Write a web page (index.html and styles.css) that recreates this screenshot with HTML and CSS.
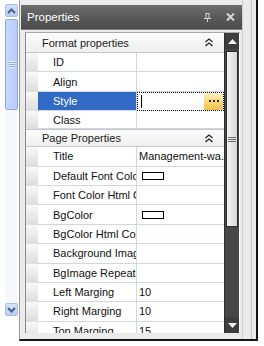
FILE: index.html
```html
<!DOCTYPE html>
<html lang="en">
<head>
    <meta charset="UTF-8">
    <title>Properties</title>
    <link rel="stylesheet" href="styles.css">
</head>
<body>
<div class="screen">

    <div class="side-scroll">
        <div class="xp-btn">
            <svg width="9" height="6" viewBox="0 0 9 6"><path d="M1 5 L4.5 1.5 L8 5" fill="none" stroke="#4d6185" stroke-width="2"/></svg>
        </div>
        <div class="xp-thumb"><span class="xp-grip"></span></div>
        <div class="xp-track"></div>
        <div class="xp-btn">
            <svg width="9" height="6" viewBox="0 0 9 6"><path d="M1 1 L4.5 4.5 L8 1" fill="none" stroke="#4d6185" stroke-width="2"/></svg>
        </div>
    </div>

    <div class="window">
        <div class="titlebar">
            <span class="title">Properties</span>
            <svg class="pin" width="7" height="9" viewBox="0 0 7 9"><path d="M1.5 0.5 H5.5 M2 0.5 V5 M5 0.5 V5 M0 5.5 H7 M3.5 5.5 V9" fill="none" stroke="#d6d6d6" stroke-width="1"/></svg>
            <svg class="close" width="9" height="8" viewBox="0 0 9 8"><path d="M1 0.5 L8 7.5 M8 0.5 L1 7.5" fill="none" stroke="#d6d6d6" stroke-width="2"/></svg>
        </div>

        <div class="content">
            <div class="panel">
                <div class="grid">
                    <div class="section">
                        <span>Format properties</span>
                        <svg class="fold" width="8" height="9" viewBox="0 0 8 9"><path d="M0.5 4 L4 1 L7.5 4 M0.5 8 L4 5 L7.5 8" fill="none" stroke="#222" stroke-width="1.3"/></svg>
                    </div>
                    <div class="row"><span class="gut"></span><span class="name">ID</span><span class="val"></span></div>
                    <div class="row"><span class="gut"></span><span class="name">Align</span><span class="val"></span></div>
                    <div class="row selected">
                        <span class="gut"></span><span class="name">Style</span>
                        <span class="val edit">
                            <span class="caret"></span>
                            <span class="dots"><svg width="10" height="2" viewBox="0 0 10 2"><path d="M0 0h2v2H0z M4 0h2v2H4z M8 0h2v2H8z" fill="#2a2a2a"/></svg></span>
                        </span>
                    </div>
                    <div class="row short"><span class="gut"></span><span class="name">Class</span><span class="val"></span></div>

                    <div class="section tight">
                        <span>Page Properties</span>
                        <svg class="fold" width="8" height="9" viewBox="0 0 8 9"><path d="M0.5 4 L4 1 L7.5 4 M0.5 8 L4 5 L7.5 8" fill="none" stroke="#222" stroke-width="1.3"/></svg>
                    </div>
                    <div class="row"><span class="gut"></span><span class="name">Title</span><span class="val">Management-wa.</span></div>
                    <div class="row"><span class="gut"></span><span class="name">Default Font Color</span><span class="val"><span class="swatch"></span></span></div>
                    <div class="row"><span class="gut"></span><span class="name">Font Color Html Code</span><span class="val"></span></div>
                    <div class="row"><span class="gut"></span><span class="name">BgColor</span><span class="val"><span class="swatch"></span></span></div>
                    <div class="row"><span class="gut"></span><span class="name">BgColor Html Code</span><span class="val"></span></div>
                    <div class="row"><span class="gut"></span><span class="name">Background Image</span><span class="val"></span></div>
                    <div class="row"><span class="gut"></span><span class="name">BgImage Repeat</span><span class="val"></span></div>
                    <div class="row"><span class="gut"></span><span class="name">Left Marging</span><span class="val">10</span></div>
                    <div class="row"><span class="gut"></span><span class="name">Right Marging</span><span class="val">10</span></div>
                    <div class="row"><span class="gut"></span><span class="name">Top Marging</span><span class="val">15</span></div>
                </div>

                <div class="vscroll">
                    <div class="vs-btn"><svg width="9" height="5" viewBox="0 0 9 5"><path d="M0 5 L4.5 0 L9 5 Z" fill="#f2f2f2"/></svg></div>
                    <div class="vs-thumb"><span class="vs-grip"></span></div>
                    <div class="vs-track"></div>
                    <div class="vs-btn"><svg width="9" height="5" viewBox="0 0 9 5"><path d="M0 0 L4.5 5 L9 0 Z" fill="#f2f2f2"/></svg></div>
                </div>
            </div>
        </div>
    </div>

</div>
</body>
</html>
```

FILE: styles.css
```css
*{
    margin: 0;
    padding: 0;
    box-sizing: border-box;
}
body{
    width: 264px;
    height: 346px;
    overflow: hidden;
    background: #fff;
    font-family: "Liberation Sans", Arial, sans-serif;
    font-size: 11px;
    color: #111;
}
.screen{
    display: flex;
    height: 346px;
}

/* left XP scrollbar */
.side-scroll{
    width: 19px;
    height: 316px;
    padding: 4px 1px 0 5px;
    display: flex;
    flex-direction: column;
}
.xp-btn{
    height: 13px;
    display: flex;
    align-items: center;
    justify-content: center;
    background: linear-gradient(#d6e3fd, #b7cbf7);
    border: 1px solid #a9bde6;
    border-radius: 2px;
}
.xp-thumb{
    height: 91px;
    margin-top: 2px;
    display: flex;
    align-items: center;
    justify-content: center;
    background: linear-gradient(90deg, #c6d7fc, #b8cdf9);
    border: 1px solid #8fa9df;
    border-radius: 2px;
}
.xp-grip{
    width: 6px;
    height: 7px;
    background: repeating-linear-gradient(#eef3ff 0 1px, #8ea8e0 1px 2px);
}
.xp-track{
    flex: 1;
    background: #f7f8fc;
}

/* window */
.window{
    width: 239px;
    height: 341px;
    padding: 5px 14px 0 1px;
    border-left: 1px solid #9a9a9a;
    border-right: 2px solid #151515;
    border-bottom: 2px solid #151515;
    background:
        linear-gradient(90deg, transparent 0 222px, #cfcfcf 222px 223px, transparent 223px 231px, #c4c4c4 231px 232px, transparent 232px),
        #ebebeb;
}
.titlebar{
    height: 25px;
    display: flex;
    align-items: center;
    padding: 0 7px 0 6px;
    background: linear-gradient(#6e6e6e, #565656 60%, #4b4b4b);
    border-bottom: 1px solid #808080;
    color: #fff;
}
.title{
    flex: 1;
    font-size: 11.5px;
}
.pin{
    margin-right: 15px;
}
.content{
    padding: 2px 2px 0 4px;
}
.panel{
    display: flex;
    height: 301px;
    border-top: 1px solid #a8a8a8;
    border-left: 1px solid #8c8c8c;
    background: #fff;
    overflow: hidden;
}
.grid{
    width: 198px;
}

.section{
    height: 20px;
    display: flex;
    align-items: center;
    padding: 0 11px 0 16px;
    background: linear-gradient(#fdfdfd, #eeeeee);
    border-bottom: 1px solid #c6c6c6;
    color: #1c1c1c;
}
.section.tight{
    height: 18px;
    border-top: 1px solid #c6c6c6;
}
.section span{
    flex: 1;
}

.row{
    height: 19.4px;
    display: flex;
}
.row.short{
    height: 18px;
}
.gut{
    width: 12px;
    flex-shrink: 0;
    background: linear-gradient(#f8f8f8, #dedede);
    border-bottom: 1px solid #e2e2e2;
}
.name{
    width: 99px;
    flex-shrink: 0;
    padding-left: 15px;
    display: flex;
    align-items: center;
    white-space: nowrap;
    overflow: hidden;
    border-bottom: 1px solid #cfd6e4;
    border-right: 1px solid #cfd6e4;
}
.val{
    flex: 1;
    padding-left: 2px;
    display: flex;
    align-items: center;
    white-space: nowrap;
    overflow: hidden;
    border-bottom: 1px solid #cfd6e4;
}
.selected .name{
    background: #316ac5;
    color: #fff;
}
.val.edit{
    position: relative;
    border: 1px dotted #000;
    padding-left: 3px;
}
.caret{
    width: 1px;
    height: 13px;
    background: #000;
}
.dots{
    position: absolute;
    right: 0;
    top: 0;
    bottom: 0;
    width: 19px;
    display: flex;
    align-items: center;
    justify-content: center;
    background: linear-gradient(#fdf2c6, #f9d36c 60%, #f6c04a);
}
.swatch{
    width: 22px;
    height: 8px;
    margin-left: 3px;
    border: 1px solid #000;
    background: #fff;
}

/* dark scrollbar of the grid */
.vscroll{
    width: 15px;
    display: flex;
    flex-direction: column;
    background: #474747;
    border-left: 1px solid #2e2e2e;
}
.vs-btn{
    height: 16px;
    display: flex;
    align-items: center;
    justify-content: center;
    background: #3d3d3d;
}
.vs-thumb{
    height: 176px;
    margin: 2px 1px 0;
    display: flex;
    align-items: center;
    justify-content: center;
    background: linear-gradient(90deg, #f2f2f2, #d8d8d8);
    border: 1px solid #2b2b2b;
}
.vs-grip{
    width: 8px;
    height: 5px;
    background: repeating-linear-gradient(#6a6a6a 0 1px, transparent 1px 2px);
}
.vs-track{
    flex: 1;
}
```
